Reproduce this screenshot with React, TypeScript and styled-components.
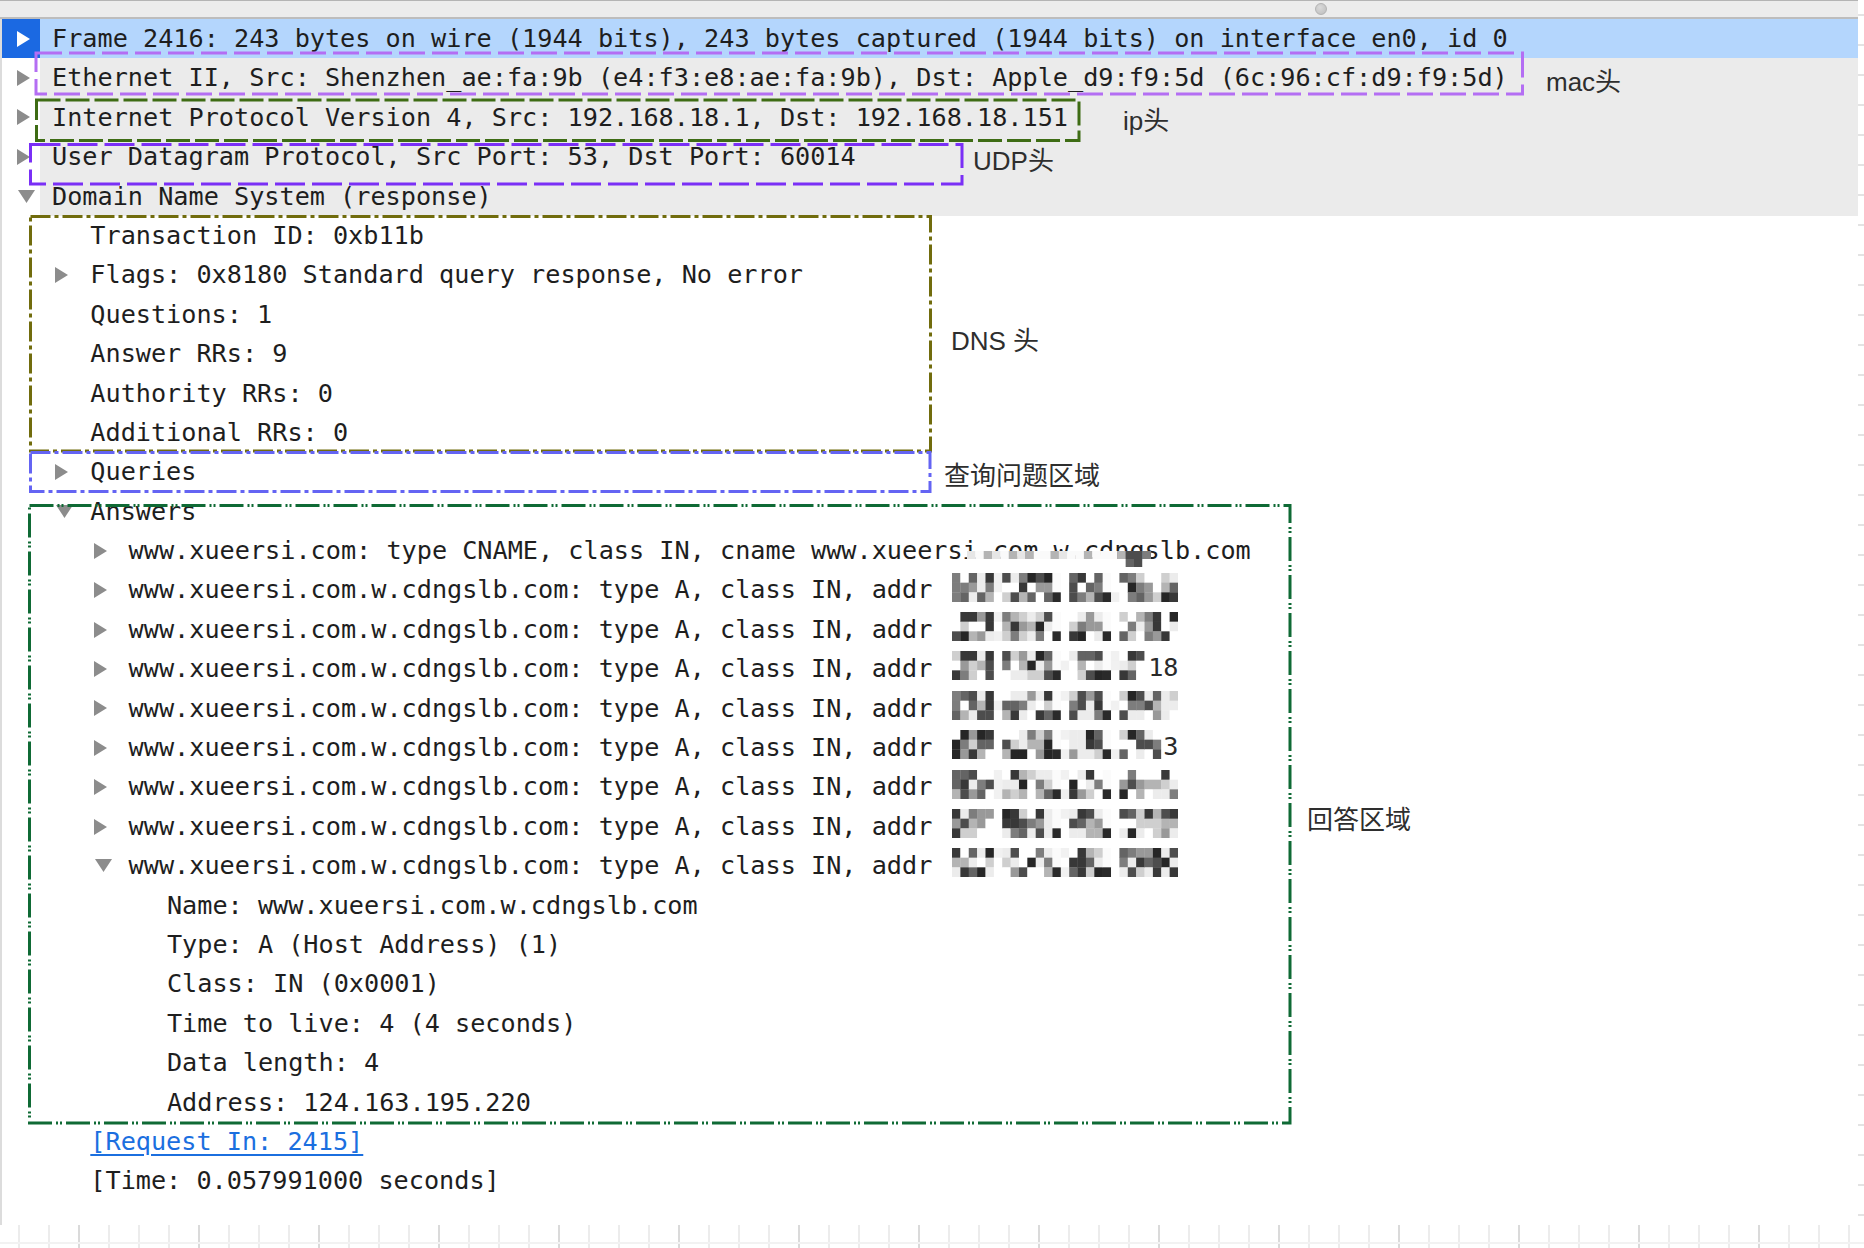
import React from "react";
import styled, { createGlobalStyle } from "styled-components";

const ROW_H = 39.4;
const INDENT = 38.3;

const GlobalStyle = createGlobalStyle`
  html, body {
    margin: 0;
    padding: 0;
    background: #fff;
  }
  body {
    width: 1864px;
    height: 1248px;
    overflow: hidden;
    font-family: "DejaVu Sans Mono", "Liberation Mono", monospace;
  }
`;

const Page = styled.div`
  position: relative;
  width: 1864px;
  height: 1248px;
  overflow: hidden;
  background: #fff;
`;

const Upper = styled.div`
  display: flex;
  height: 1225px;
`;

const MainColumn = styled.div`
  width: 1858px;
  display: flex;
  flex-direction: column;
`;

const TitleStrip = styled.div`
  box-sizing: border-box;
  height: 19px;
  flex: none;
  background: #ececec;
  border-top: 1px solid #b4b4b4;
  border-bottom: 2px solid #bdbdbd;
  display: flex;
  align-items: center;
`;

const Grip = styled.div`
  box-sizing: border-box;
  width: 12px;
  height: 12px;
  margin-left: 1315px;
  border-radius: 50%;
  border: 1px solid #b3b3b3;
  background: radial-gradient(circle at 40% 35%, #dadada, #bcbcbc);
`;

const TreePane = styled.div`
  flex: 1;
  border-left: 2px solid #dcdcdc;
  display: flex;
  flex-direction: column;
`;

const TickRail = styled.div`
  width: 6px;
  background: repeating-linear-gradient(
    to bottom,
    transparent 0 14px,
    #e3e3e3 14px 16px,
    transparent 16px 30px
  );
`;

const Ruler = styled.div`
  height: 23px;
  background:
    linear-gradient(to bottom, transparent 17px, #f2f2f2 17px 19px, transparent 19px),
    repeating-linear-gradient(to right, transparent 0 78px, #dadada 78px 80px, transparent 80px 120px),
    repeating-linear-gradient(to right, transparent 0 18px, #ececec 18px 20px, transparent 20px 30px);
`;

const Row = styled.div<{ $depth: number }>`
  display: flex;
  height: ${ROW_H}px;
  flex: none;
  padding-left: ${(p) => p.$depth * INDENT}px;
`;

const Gutter = styled.div<{ $selected?: boolean }>`
  box-sizing: border-box;
  width: 38px;
  flex: none;
  display: flex;
  align-items: center;
  padding-left: 15px;
  background: ${(p) => (p.$selected ? "#1b69e2" : "transparent")};
`;

type Tone = "plain" | "top" | "selected";

const Label = styled.div<{ $tone: Tone }>`
  flex: 1;
  display: flex;
  align-items: center;
  padding-left: 12px;
  white-space: pre;
  font-size: 25.2px;
  line-height: ${ROW_H}px;
  color: #1e1e1e;
  background: ${(p) =>
    p.$tone === "selected" ? "#b4d6fd" : p.$tone === "top" ? "#ebebeb" : "transparent"};
`;

const Link = styled.span`
  color: #1b6fdf;
  text-decoration: underline;
  text-underline-offset: 4px;
`;

const MosaicWrap = styled.span`
  position: relative;
  display: inline-flex;
  margin-left: 5px;
  margin-bottom: 6px;
`;

const MosaicTail = styled.span`
  position: absolute;
  right: 0;
  top: 50%;
  transform: translateY(-44%);
  line-height: 1;
  font-size: 25.2px;
  color: #2a2a2a;
`;

const Overlay = styled.svg`
  position: absolute;
  left: 0;
  top: 0;
  pointer-events: none;
`;

const Note = styled.span<{ $x: number; $y: number }>`
  position: absolute;
  left: ${(p) => p.$x}px;
  top: ${(p) => p.$y - 17.5}px;
  font-family: "Liberation Sans", "Noto Sans CJK SC", sans-serif;
  font-size: 26px;
  line-height: 32px;
  color: #2e2e2e;
  white-space: nowrap;
`;

function rng(seed: number) {
  let a = seed >>> 0;
  return () => {
    a = (a + 0x6d2b79f5) | 0;
    let t = Math.imul(a ^ (a >>> 15), 1 | a);
    t = (t + Math.imul(t ^ (t >>> 7), 61 | t)) ^ t;
    return ((t ^ (t >>> 14)) >>> 0) / 4294967296;
  };
}

const GRAYS = [
  "#262626", "#383838", "#4d4d4d", "#646464", "#7d7d7d",
  "#999999", "#b4b4b4", "#cfcfcf", "#e6e6e6", "#f6f6f6",
];

// d = digit, g = gap, . = dot
const CELL_KIND = "dddddgdddddd.gdddd.gddddddd";
const M_W = 226;
const M_H = 29;

const Mosaic = ({ seed, tail }: { seed: number; tail?: string }) => {
  const r = rng(seed);
  const cols = CELL_KIND.length;
  const cw = M_W / cols;
  const ch = M_H / 3;
  const blank = tail ? Math.ceil((tail.length * 15.2) / cw) : 0;
  const cells: React.ReactNode[] = [];
  for (let c = 0; c < cols; c++) {
    for (let rr = 0; rr < 3; rr++) {
      const kind = CELL_KIND[c];
      let fill = "#ffffff";
      if (c >= cols - blank) fill = "#ffffff";
      else if (kind === "d") {
        const v = r();
        fill = v < 0.3 ? (v < 0.15 ? "#ffffff" : "#ececec") : GRAYS[Math.floor(r() * 8)];
      } else if (kind === ".") fill = rr === 2 ? "#2a2a2a" : "#fbfbfb";
      else fill = r() > 0.7 ? "#f1f1f1" : "#ffffff";
      cells.push(
        <rect key={`${c}-${rr}`} x={c * cw} y={rr * ch} width={cw + 0.3} height={ch + 0.3} fill={fill} />
      );
    }
  }
  return (
    <MosaicWrap>
      <svg width={M_W} height={M_H}>{cells}</svg>
      {tail && <MosaicTail>{tail}</MosaicTail>}
    </MosaicWrap>
  );
};

const Arrow = ({ open, color }: { open?: boolean; color: string }) =>
  open ? (
    <svg width="17" height="13" style={{ marginLeft: 1 }}>
      <polygon points="0,0 17,0 8.5,13" fill={color} />
    </svg>
  ) : (
    <svg width="13" height="16">
      <polygon points="0,0 13,8 0,16" fill={color} />
    </svg>
  );

interface Item {
  depth: number;
  text: React.ReactNode;
  toggle?: "open" | "closed";
  selected?: boolean;
}

const ADDR = "www.xueersi.com.w.cdngslb.com: type A, class IN, addr ";

const items: Item[] = [
  {
    depth: 0,
    toggle: "closed",
    selected: true,
    text: "Frame 2416: 243 bytes on wire (1944 bits), 243 bytes captured (1944 bits) on interface en0, id 0",
  },
  {
    depth: 0,
    toggle: "closed",
    text: "Ethernet II, Src: Shenzhen_ae:fa:9b (e4:f3:e8:ae:fa:9b), Dst: Apple_d9:f9:5d (6c:96:cf:d9:f9:5d)",
  },
  { depth: 0, toggle: "closed", text: "Internet Protocol Version 4, Src: 192.168.18.1, Dst: 192.168.18.151" },
  { depth: 0, toggle: "closed", text: "User Datagram Protocol, Src Port: 53, Dst Port: 60014" },
  { depth: 0, toggle: "open", text: "Domain Name System (response)" },
  { depth: 1, text: "Transaction ID: 0xb11b" },
  { depth: 1, toggle: "closed", text: "Flags: 0x8180 Standard query response, No error" },
  { depth: 1, text: "Questions: 1" },
  { depth: 1, text: "Answer RRs: 9" },
  { depth: 1, text: "Authority RRs: 0" },
  { depth: 1, text: "Additional RRs: 0" },
  { depth: 1, toggle: "closed", text: "Queries" },
  { depth: 1, toggle: "open", text: "Answers" },
  { depth: 2, toggle: "closed", text: "www.xueersi.com: type CNAME, class IN, cname www.xueersi.com.w.cdngslb.com" },
  { depth: 2, toggle: "closed", text: <>{ADDR}<Mosaic seed={11} /></> },
  { depth: 2, toggle: "closed", text: <>{ADDR}<Mosaic seed={23} /></> },
  { depth: 2, toggle: "closed", text: <>{ADDR}<Mosaic seed={37} tail="18" /></> },
  { depth: 2, toggle: "closed", text: <>{ADDR}<Mosaic seed={41} /></> },
  { depth: 2, toggle: "closed", text: <>{ADDR}<Mosaic seed={53} tail="3" /></> },
  { depth: 2, toggle: "closed", text: <>{ADDR}<Mosaic seed={67} /></> },
  { depth: 2, toggle: "closed", text: <>{ADDR}<Mosaic seed={71} /></> },
  { depth: 2, toggle: "open", text: <>{ADDR}<Mosaic seed={89} /></> },
  { depth: 3, text: "Name: www.xueersi.com.w.cdngslb.com" },
  { depth: 3, text: "Type: A (Host Address) (1)" },
  { depth: 3, text: "Class: IN (0x0001)" },
  { depth: 3, text: "Time to live: 4 (4 seconds)" },
  { depth: 3, text: "Data length: 4" },
  { depth: 3, text: "Address: 124.163.195.220" },
  { depth: 1, text: <Link>[Request In: 2415]</Link> },
  { depth: 1, text: "[Time: 0.057991000 seconds]" },
];

interface Box {
  x1: number;
  y1: number;
  x2: number;
  y2: number;
  color: string;
  dash: string;
}

const boxes: Box[] = [
  { x1: 36, y1: 53, x2: 1522.5, y2: 94, color: "#b46ef3", dash: "26 7" },
  { x1: 36.5, y1: 100, x2: 1079, y2: 140.5, color: "#3e6c14", dash: "24 5" },
  { x1: 30.5, y1: 144.5, x2: 962, y2: 184, color: "#7a2ff6", dash: "30 7" },
  { x1: 30.5, y1: 216.5, x2: 930.5, y2: 451, color: "#716c0d", dash: "20 4 4 4" },
  { x1: 30.5, y1: 452.5, x2: 930, y2: 491.5, color: "#6464f3", dash: "20 4 4 4" },
  { x1: 29.5, y1: 505.5, x2: 1290, y2: 1123, color: "#0f6a35", dash: "24 4 2 2 2 4" },
];

const notes = [
  { x: 1546, y: 83, text: "mac头" },
  { x: 1123, y: 122, text: "ip头" },
  { x: 973, y: 162, text: "UDP头" },
  { x: 951, y: 342, text: "DNS 头" },
  { x: 944, y: 477, text: "查询问题区域" },
  { x: 1307, y: 821, text: "回答区域" },
];

// pixelated strip over the cname value
const Smudge = () => {
  const r = rng(5);
  const cells: React.ReactNode[] = [];
  const x0 = 967;
  const cw = 8.35;
  for (let c = 0; c < 22; c++) {
    const x = x0 + c * cw;
    const dark = c >= 19 && c <= 21;
    const top = dark ? GRAYS[2 + Math.floor(r() * 3)] : r() > 0.55 ? GRAYS[6 + Math.floor(r() * 3)] : "#fafafa";
    const bottom = dark && c !== 21 ? GRAYS[1 + Math.floor(r() * 3)] : "#ffffff";
    cells.push(<rect key={`t${c}`} x={x} y={551} width={cw + 0.3} height={8} fill={top} />);
    cells.push(<rect key={`b${c}`} x={x} y={559} width={cw + 0.3} height={8} fill={bottom} />);
  }
  return <g>{cells}</g>;
};

export default function App() {
  return (
    <Page>
      <GlobalStyle />
      <Upper>
        <MainColumn>
          <TitleStrip>
            <Grip />
          </TitleStrip>
          <TreePane>
            {items.map((it, i) => {
              const tone: Tone = it.selected ? "selected" : it.depth === 0 ? "top" : "plain";
              return (
                <Row key={i} $depth={it.depth}>
                  <Gutter $selected={it.selected}>
                    {it.toggle && (
                      <Arrow open={it.toggle === "open"} color={it.selected ? "#ffffff" : "#8c8c8c"} />
                    )}
                  </Gutter>
                  <Label $tone={tone}>{it.text}</Label>
                </Row>
              );
            })}
          </TreePane>
        </MainColumn>
        <TickRail />
      </Upper>
      <Ruler />

      <Overlay width={1864} height={1248}>
        <Smudge />
        {boxes.map((b, i) => (
          <rect
            key={i}
            x={b.x1}
            y={b.y1}
            width={b.x2 - b.x1}
            height={b.y2 - b.y1}
            fill="none"
            stroke={b.color}
            strokeWidth={3}
            strokeDasharray={b.dash}
          />
        ))}
      </Overlay>
      {notes.map((n) => (
        <Note key={n.text} $x={n.x} $y={n.y}>
          {n.text}
        </Note>
      ))}
    </Page>
  );
}
